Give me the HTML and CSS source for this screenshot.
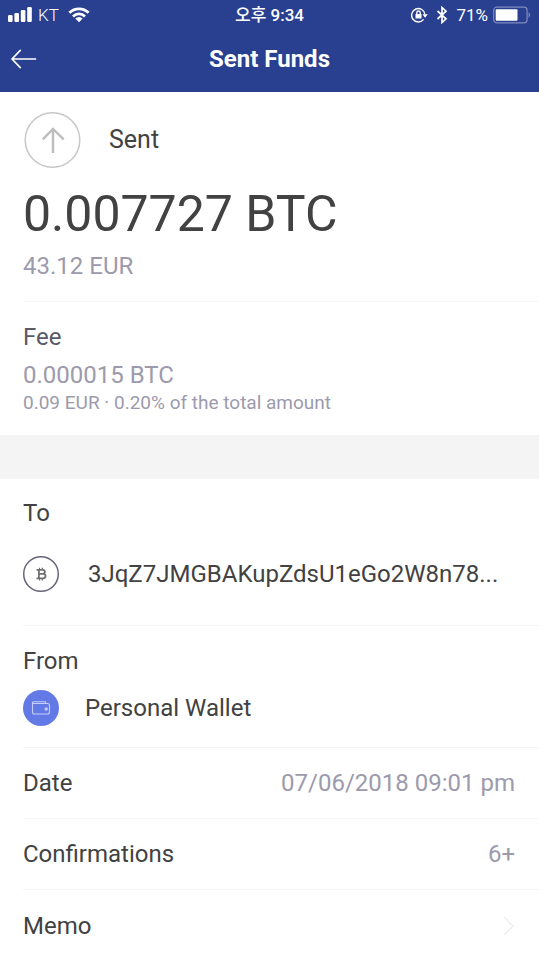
FILE: index.html
```html
<!DOCTYPE html>
<html lang="en">
<head>
<meta charset="utf-8">
<meta name="viewport" content="width=device-width, initial-scale=1">
<title>Sent Funds</title>
<link rel="stylesheet" href="styles.css">
</head>
<body>
<header class="top">
  <div class="status">
    <div class="status-side">
      <svg width="24" height="16" viewBox="0 0 24 16" fill="#fff" aria-hidden="true"><rect y="8" width="4.600" height="7" rx="1.200"/><rect x="6.400" y="6" width="4.600" height="9" rx="1.200"/><rect x="12.800" y="3" width="4.600" height="12" rx="1.200"/><rect x="19.200" width="4.600" height="15" rx="1.200"/></svg>
      <span class="carrier">KT</span>
      <svg class="wifi" width="22" height="16" viewBox="0 0 22 16" fill="none" stroke="#fff" stroke-width="2.800" aria-hidden="true"><path d="M1.400 5.800a13.700 13.700 0 0 1 19.200 0M5 9.400a8.600 8.600 0 0 1 12 0"/><path d="M11 15.200 7.300 11.500a5.300 5.300 0 0 1 7.400 0z" fill="#fff" stroke="none"/></svg>
    </div>
    <time class="clock">오후 9:34</time>
    <div class="status-side status-end">
      <svg width="17" height="16" viewBox="0 0 17 16" fill="none" stroke="#fff" stroke-width="1.400" aria-hidden="true"><path d="M12.600 12.400A6.700 6.700 0 1 1 14 7.500"/><path d="M11.400 7.200h5.400l-2.700 3.600z" fill="#fff" stroke="none"/><rect x="4.500" y="7" width="6" height="4.400" rx=".5" fill="#fff" stroke="none"/><path d="M5.800 7.200V5.700a1.700 1.700 0 0 1 3.400 0v1.500"/></svg>
      <svg class="bluetooth" width="12" height="18" viewBox="0 0 12 18" fill="none" stroke="#fff" stroke-width="1.700" aria-hidden="true"><path d="M1.500 5 10 12.800 6 16.500V1.500L10 5.200 1.500 13"/></svg>
      <span>71%</span>
      <svg class="battery" width="38" height="18" viewBox="0 0 38 18" aria-hidden="true"><rect x=".7" y="1.200" width="33.400" height="15.600" rx="3" fill="none" stroke="#8089bd" stroke-width="1.200"/><rect x="2.700" y="3.200" width="21.800" height="11.600" rx="1" fill="#fff"/><path d="M35.600 6q3 3 0 6z" fill="#8089bd"/></svg>
    </div>
  </div>
  <div class="nav">
    <button class="back" type="button" aria-label="Back">
      <svg width="26" height="20" viewBox="0 0 26 20" fill="none" stroke="#fff" stroke-width="1.700" stroke-linecap="round" stroke-linejoin="round"><path d="M24.500 10H1M9.300 1.300 1 10l8.300 8.700"/></svg>
    </button>
    <h1>Sent Funds</h1>
  </div>
</header>
<main>
  <section class="summary block">
    <div class="kind">
      <svg width="58" height="58" viewBox="0 0 58 58" fill="none" aria-hidden="true"><circle cx="29.500" cy="29" r="27.300" stroke="#c8c8c8" stroke-width="1.500"/><path d="M30 42V18M19.800 28.300 30 18l10.700 10.300" stroke="#bdbdbd" stroke-width="2.400"/></svg>
      <span>Sent</span>
    </div>
    <p class="amount">0.007727 BTC</p>
    <p class="muted">43.12 EUR</p>
  </section>
  <section class="fee block">
    <h2 class="fee-title">Fee</h2>
    <p class="muted">0.000015 BTC</p>
    <p class="muted note">0.09 EUR · 0.20% of the total amount</p>
  </section>
  <div class="band"></div>
  <section class="to block">
    <h2>To</h2>
    <div class="party recipient">
      <svg width="38" height="38" viewBox="0 0 38 38" fill="none" aria-hidden="true"><circle cx="19" cy="19" r="17.300" stroke="#66647a" stroke-width="1.500"/><g stroke="#707070" stroke-width="1.800"><path d="M14.500 14.800h6.300a2 2 0 0 1 0 4.100h-4M14.500 23.300h6.800a2.200 2.200 0 0 0 0-4.400M16.900 14.800v8.500"/><path d="M17.500 12.800v1.700M20.300 12.800v1.700M17.500 23.500v1.900M20.300 23.500v1.900" stroke-width="1.200"/></g></svg>
      <span class="address">3JqZ7JMGBAKupZdsU1eGo2W8n78...</span>
    </div>
  </section>
  <section class="from block">
    <h2>From</h2>
    <div class="party">
      <svg width="38" height="38" viewBox="0 0 38 38" fill="none" aria-hidden="true"><circle cx="19" cy="19" r="18" fill="#637ae6"/><g stroke="#c5cef8" stroke-width="1.100"><path d="M10.500 13v10q0 2 2 2h13q2 0 2-2v-6.500q0-2-2-2h-15M10.500 12.700h13v1.800"/><circle cx="24.200" cy="20" r="1.700" fill="#c5cef8" stroke="none"/></g></svg>
      <span>Personal Wallet</span>
    </div>
  </section>
  <dl class="details">
    <div class="row block"><dt>Date</dt><dd>07/06/2018 09:01 pm</dd></div>
    <div class="row block"><dt>Confirmations</dt><dd>6+</dd></div>
  </dl>
  <a class="row memo" href="#memo">
    <span>Memo</span>
    <svg width="14" height="22" viewBox="0 0 14 22" fill="none" stroke="#f0f0f2" stroke-width="1.700" aria-hidden="true"><path d="m3 2 9 9-9 9"/></svg>
  </a>
</main>
</body>
</html>
```
FILE: styles.css
```css
* {
  box-sizing: border-box;
}

body {
  margin: 0;
  background: #fff;
  color: #424242;
  font: 24px/32px Roboto, "Noto Sans CJK KR", sans-serif;
}

h1,
h2,
p,
dl,
dd {
  margin: 0;
}

h2 {
  font-size: 24px;
  font-weight: 400;
}

svg {
  display: block;
  flex: none;
}

.top {
  background: #293f8f;
  color: #fff;
}

.status {
  display: grid;
  grid-template-columns: 1fr auto 1fr;
  align-items: center;
  height: 30px;
  padding: 0 8px;
  font-size: 17px;
  line-height: 30px;
}

.status-side {
  display: flex;
  align-items: center;
}

.carrier {
  margin-left: 6px;
  font-weight: 300;
}

.wifi {
  margin-left: 9px;
}

.status-end {
  justify-content: flex-end;
}

.clock {
  font-weight: 500;
}

.bluetooth {
  margin: 0 8px;
}

.battery {
  margin-left: 5px;
}

.nav {
  display: grid;
  grid-template-columns: 48px 1fr 48px;
  align-items: center;
  height: 62px;
  padding-bottom: 4px;
}

.back {
  height: 48px;
  padding: 0 0 0 11px;
  border: 0;
  background: none;
  cursor: pointer;
}

h1 {
  font-size: 24px;
  font-weight: 700;
  text-align: center;
}

.block {
  margin-left: 23px;
  border-bottom: 1px solid #f4f4f6;
}

.kind {
  display: flex;
  align-items: center;
  gap: 28px;
  font-size: 25px;
}

.summary {
  padding: 19px 0;
}

.amount {
  margin: 13px 0 4px;
  font-size: 50px;
  line-height: 64px;
}

.muted {
  color: #9c9aac;
}

.fee {
  padding: 19px 0 20px;
  border-bottom: 0;
}

.fee-title {
  margin-bottom: 6px;
  color: #5b5967;
}

.note {
  font-size: 19px;
  line-height: 24px;
}

.band {
  height: 44px;
  background: #f4f4f4;
}

.to {
  padding: 18px 0 32px;
}

.from {
  padding: 19px 0 20px;
}

.party {
  display: flex;
  align-items: center;
  gap: 25px;
  margin: 12px 0 0 -1px;
}

.recipient {
  gap: 28px;
  margin-top: 26px;
}

.address {
  min-width: 0;
  padding-right: 16px;
  overflow: hidden;
  white-space: nowrap;
  text-overflow: ellipsis;
}

.row {
  display: flex;
  align-items: center;
  justify-content: space-between;
  height: 71px;
  padding-right: 24px;
}

.row dd {
  color: #9c9aac;
}

.memo {
  margin-left: 23px;
  color: inherit;
  text-decoration: none;
}
```
